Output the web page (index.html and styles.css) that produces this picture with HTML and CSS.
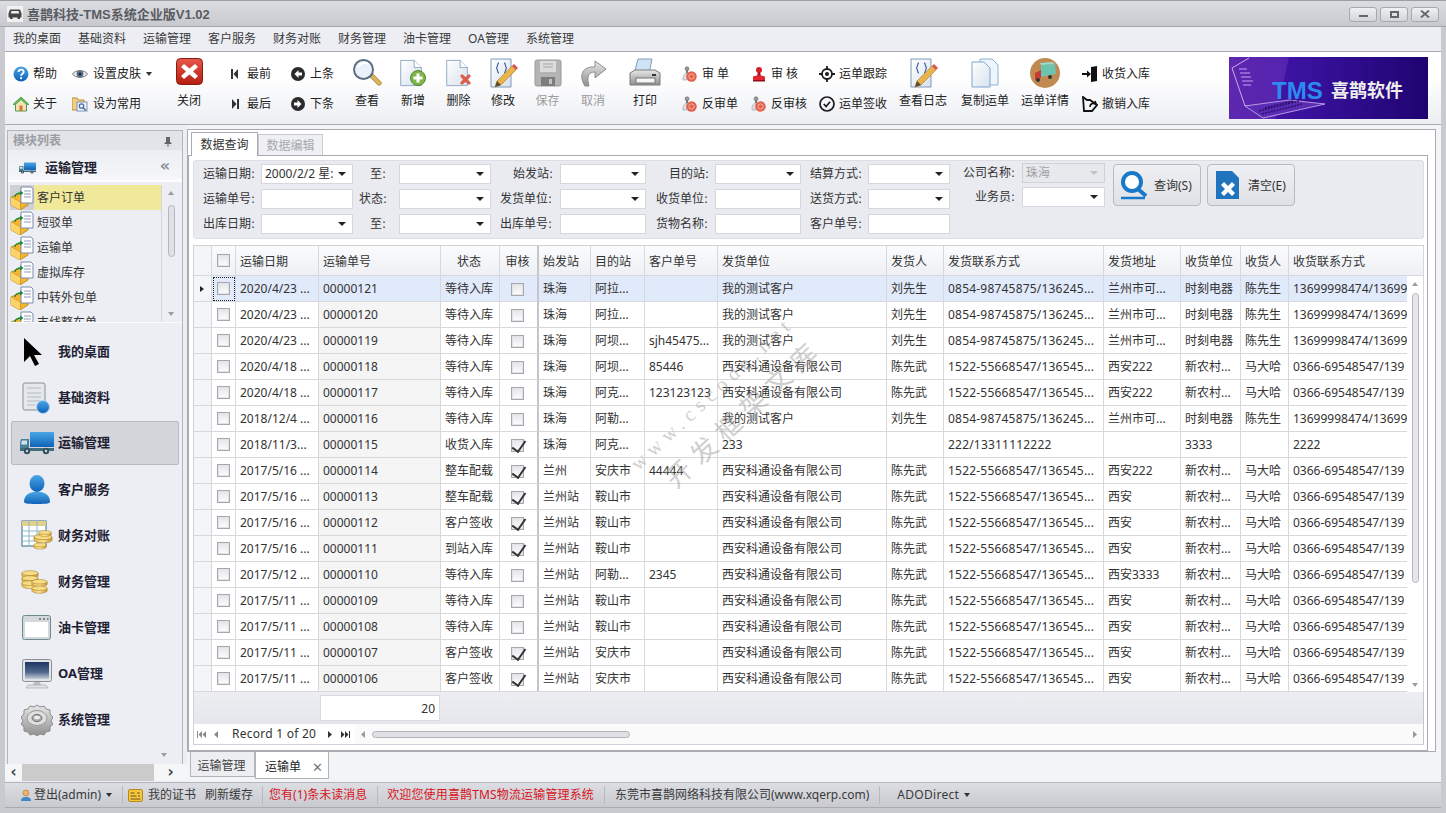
FILE: index.html
```html
<!DOCTYPE html>
<html lang="zh-CN">
<head>
<meta charset="utf-8">
<title>喜鹊科技-TMS系统企业版V1.02</title>
<link rel="stylesheet" href="styles.css">
</head>
<body>
<svg class="defs" aria-hidden="true">
  <defs>
    <linearGradient id="gRed" x1="0" y1="0" x2="0" y2="1"><stop offset="0" stop-color="#e8584a"/><stop offset="1" stop-color="#b51d12"/></linearGradient>
    <linearGradient id="gBlue" x1="0" y1="0" x2="0" y2="1"><stop offset="0" stop-color="#4aa6e6"/><stop offset="1" stop-color="#0f62b8"/></linearGradient>
    <linearGradient id="gPaper" x1="0" y1="0" x2="1" y2="1"><stop offset="0" stop-color="#ffffff"/><stop offset="1" stop-color="#d7e1ee"/></linearGradient>
    <linearGradient id="gGold" x1="0" y1="0" x2="1" y2="0"><stop offset="0" stop-color="#e5b94e"/><stop offset=".5" stop-color="#fbe59a"/><stop offset="1" stop-color="#c9952c"/></linearGradient>
    <linearGradient id="gScreen" x1="0" y1="0" x2="0" y2="1"><stop offset="0" stop-color="#1d3560"/><stop offset=".6" stop-color="#51688c"/><stop offset="1" stop-color="#c4ccd8"/></linearGradient>
    <linearGradient id="gGrey" x1="0" y1="0" x2="0" y2="1"><stop offset="0" stop-color="#e8e8e8"/><stop offset="1" stop-color="#8f8f8f"/></linearGradient>
    <linearGradient id="gBanner" x1="0" y1="0" x2="1" y2="0"><stop offset="0" stop-color="#4b1a9e"/><stop offset=".35" stop-color="#3a12a0"/><stop offset="1" stop-color="#1f0470"/></linearGradient>

    <symbol id="doc" viewBox="0 0 30 30"><path d="M3 1h15l8 8v20H3z" fill="url(#gPaper)" stroke="#8ba3c4"/><path d="M18 1v8h8" fill="#fff" stroke="#8ba3c4"/></symbol>
    <symbol id="pencil" viewBox="0 0 30 30"><path d="M3 1h20v28H3z" fill="url(#gPaper)" stroke="#7f98bd"/><path d="M11 5c-2 0-1 3-2 4s-1 1 0 2 0 4 2 4M16 5c2 0 1 3 2 4s1 1 0 2 0 4-2 4" fill="none" stroke="#4c6fa6" stroke-width="1.300"/><path d="M7 29l2-6L24 8l4 4-15 15z" fill="#e9b44c" stroke="#a87a26" stroke-width=".6"/><path d="M24 8l2-2 4 4-2 2z" fill="#d9534f"/><path d="M7 29l2-6 4 4z" fill="#5c4a32"/></symbol>
    <symbol id="stamp" viewBox="0 0 16 16"><circle cx="5" cy="2.800" r="2" fill="#9a9a9a" stroke="#555" stroke-width=".5"/><path d="M4 4h2v3H4z" fill="#777"/><path d="M1 13c0-4 2-6 4-6v7H1z" fill="#e0e0e0" stroke="#888" stroke-width=".5"/><circle cx="9.500" cy="10.500" r="5.200" fill="#e2604c"/><circle cx="9.500" cy="10.500" r="2.600" fill="none" stroke="#f6b6a6"/></symbol>
    <symbol id="pkg" viewBox="0 0 24 24"><path d="M1 11l9-4 8 4v8l-8 5-9-5z" fill="#f4b62e" stroke="#a87416" stroke-width=".7"/><path d="M1 11l9 5 8-5" fill="none" stroke="#a87416" stroke-width=".7"/><path d="M10 16v8" stroke="#a87416" stroke-width=".7"/><path d="M1 11l9 5v8l-9-5z" fill="#fbd366"/><path d="M11 1h10l2 2v14H11z" fill="#fff" stroke="#7d8bb0"/><path d="M14 5h7M14 8h7M14 11h7" stroke="#8f9bbd"/><path d="M5 11c0-3 2-4 7-4" fill="none" stroke="#1b8a3a" stroke-width="1.400"/><path d="M10 4.500l3.500 2.500-3.500 2.500z" fill="#1b8a3a"/></symbol>
    <symbol id="truck" viewBox="0 0 34 24"><path d="M10 1h24v15H10z" fill="url(#gBlue)"/><path d="M1 8h8v11H0v-7z" fill="#4a7f96"/><path d="M2 9.500h5v4H1z" fill="#cfe3ec"/><path d="M0 17h34v3H0z" fill="#3f6d80"/><circle cx="7" cy="20" r="3.200" fill="#38505c"/><circle cx="26" cy="20" r="3.200" fill="#38505c"/><circle cx="7" cy="20" r="1.200" fill="#cdd8de"/><circle cx="26" cy="20" r="1.200" fill="#cdd8de"/></symbol>
    <symbol id="gear" viewBox="0 0 32 32"><path d="M16 1l3 2 4-1 2 3 4 1 0 4 3 3-2 4 2 3-3 3 0 4-4 1-2 3-4-1-3 2-3-2-4 1-2-3-4-1 0-4-3-3 2-3-2-4 3-3 0-4 4-1 2-3 4 1z" fill="url(#gGrey)" stroke="#8c8c8c"/><ellipse cx="16" cy="14" rx="10" ry="7.500" fill="#dedede" stroke="#9a9a9a"/><ellipse cx="16" cy="14" rx="5" ry="3.600" fill="#a8a8a8" stroke="#777"/><ellipse cx="16" cy="13.500" rx="3" ry="1.800" fill="#eee"/></symbol>
    <symbol id="coin" viewBox="0 0 20 9"><path d="M1 3v3c0 1.500 4 3 9 3s9-1.500 9-3V3z" fill="url(#gGold)" stroke="#a07a20" stroke-width=".6"/><ellipse cx="10" cy="3" rx="9" ry="2.700" fill="#f7dc85" stroke="#a07a20" stroke-width=".6"/></symbol>
  </defs>
</svg>

<div class="win">
  <header class="title">
    <svg class="app-ico" viewBox="0 0 16 16"><rect width="16" height="16" fill="#f1f1f3"/><path d="M3 3.500h10l1.500 4v4h-13v-4z" fill="#444"/><path d="M4.500 5h7l.8 2.500H3.700z" fill="#eee"/><rect x="3" y="11" width="2.500" height="2" fill="#444"/><rect x="10.500" y="11" width="2.500" height="2" fill="#444"/></svg>
    <span class="title-text">喜鹊科技-TMS系统企业版V1.02</span>
    <div class="winbtns">
      <button class="wb"><span class="wb-min"></span></button>
      <button class="wb"><span class="wb-max"></span></button>
      <button class="wb"><svg viewBox="0 0 10 8" width="10" height="8"><path d="M1 .5l8 7M9 .5l-8 7" stroke="#666" stroke-width="1.800"/></svg></button>
    </div>
  </header>

  <nav class="menu">
    <span>我的桌面</span><span>基础资料</span><span>运输管理</span><span>客户服务</span><span>财务对账</span><span>财务管理</span><span>油卡管理</span><span>OA管理</span><span>系统管理</span>
  </nav>

  <section class="toolbar">
    <div class="tc">
      <div class="ti"><svg class="i16" viewBox="0 0 16 16"><circle cx="8" cy="8" r="7.500" fill="url(#gBlue)"/><path d="M5.500 6c0-3.200 5.200-3.200 5.200-.2 0 2-2.600 1.800-2.600 3.900" fill="none" stroke="#fff" stroke-width="1.800"/><circle cx="8.100" cy="12.200" r="1.100" fill="#fff"/></svg><span class="gap4">帮助</span></div>
      <div class="ti"><svg class="i16" viewBox="0 0 16 16"><path d="M8 1L0 8.500h2.500V15h11V8.500H16z" fill="#f4e3b5" stroke="#4d9a4c"/><path d="M8 1L0 8.500h3L8 4l5 4.500h3z" fill="#5fb35a"/><rect x="6.500" y="9.500" width="3" height="5.500" fill="#d9772c"/></svg><span class="gap4">关于</span></div>
    </div>
    <div class="tc">
      <div class="ti"><svg class="i16" viewBox="0 0 16 16"><path d="M.5 8C3 3.500 13 3.500 15.500 8 13 12.500 3 12.500.5 8z" fill="#e8e8ea" stroke="#777"/><circle cx="8" cy="8" r="3.400" fill="#5b6f8c"/><circle cx="8" cy="8" r="1.500" fill="#1e2b3f"/></svg><span class="gap6">设置皮肤</span><i class="caret big-caret"></i></div>
      <div class="ti"><svg class="i16" viewBox="0 0 16 16"><path d="M0 2h5l1.500 2H12v10H0z" fill="#f2cf80" stroke="#b98f3a"/><rect x="5" y="6" width="10" height="9" fill="#eef3fa" stroke="#7e93b8"/><circle cx="9.500" cy="10" r="2.200" fill="none" stroke="#4c6fa6" stroke-width="1.300"/><path d="M11 11.500l3 3" stroke="#4c6fa6" stroke-width="1.500"/></svg><span class="gap6">设为常用</span></div>
    </div>
    <div class="big">
      <svg class="close-ico" viewBox="0 0 27 27"><rect x=".5" y=".5" width="26" height="26" rx="4" fill="url(#gRed)" stroke="#8c1a10"/><path d="M8 6l5.500 4.500L19 6l3 3-5 4.500 5 4.500-3 3-5.500-4.500L8 21l-3-3 5-4.500L5 9z" fill="#fff"/></svg>
      <span class="big-l">关闭</span>
    </div>
    <div class="tc pad17">
      <div class="ti"><svg class="i8" viewBox="0 0 8 12"><rect x="0" y="1" width="2" height="10" fill="#333"/><path d="M7 1v10L2.500 6z" fill="#333"/></svg><span class="gap9">最前</span></div>
      <div class="ti"><svg class="i8" viewBox="0 0 8 12"><rect x="6" y="1" width="2" height="10" fill="#333"/><path d="M1 1v10l4.500-5z" fill="#333"/></svg><span class="gap9">最后</span></div>
    </div>
    <div class="tc">
      <div class="ti"><svg class="i14" viewBox="0 0 14 14"><circle cx="7" cy="7" r="7" fill="#2b2b2b"/><path d="M7.500 3L3.500 7l4 4V8.500h3.500v-3H7.500z" fill="#fff"/></svg><span class="gap6">上条</span></div>
      <div class="ti"><svg class="i14" viewBox="0 0 14 14"><circle cx="7" cy="7" r="7" fill="#2b2b2b"/><path d="M6.500 3l4 4-4 4V8.500H3v-3h3.500z" fill="#fff"/></svg><span class="gap6">下条</span></div>
    </div>
    <div class="big">
      <svg class="big-i" viewBox="0 0 30 30"><path d="M18 19l3-3 8 8c1 1 0 4-3 3z" fill="#d9b45a" stroke="#9a7a2c" stroke-width=".7"/><circle cx="11.500" cy="11.500" r="9.500" fill="#e9f2fb" stroke="#5e6d7d" stroke-width="2"/><path d="M6 9c2-4 7-5 10-3" fill="none" stroke="#fff" stroke-width="2"/></svg>
      <span class="big-l">查看</span>
    </div>
    <div class="big">
      <svg class="big-i" viewBox="0 0 30 30"><use href="#doc" width="27" height="30"/><circle cx="20" cy="20" r="7.500" fill="#7fb54b" stroke="#4d8a2a"/><path d="M18.500 15.500h3v3h3v3h-3v3h-3v-3h-3v-3h3z" fill="#fff"/></svg>
      <span class="big-l">新增</span>
    </div>
    <div class="big">
      <svg class="big-i" viewBox="0 0 30 30"><use href="#doc" width="27" height="30"/><path d="M16 18l2-2 3.500 3 3.500-3 2 2-3 3.500 3 3.500-2 2-3.500-3-3.500 3-2-2 3-3.500z" fill="#d9604c"/></svg>
      <span class="big-l">删除</span>
    </div>
    <div class="big">
      <svg class="big-i" viewBox="0 0 30 30"><use href="#pencil"/></svg>
      <span class="big-l">修改</span>
    </div>
    <div class="big off">
      <svg class="big-i" viewBox="0 0 30 30"><rect x="2" y="2" width="26" height="26" rx="2" fill="#b4b4b4" stroke="#999"/><rect x="7" y="3" width="16" height="11" fill="#dcdcdc"/><path d="M10 6h10M10 9h10" stroke="#a5a5a5"/><rect x="8" y="19" width="14" height="9" fill="#7d7d7d"/><rect x="16" y="21" width="3" height="5" fill="#c4c4c4"/></svg>
      <span class="big-l">保存</span>
    </div>
    <div class="big off">
      <svg class="big-i" viewBox="0 0 30 30"><path d="M7 28C1 19 3 8 17 9V3l11 8-11 9v-6c-8 0-8 6-6 14z" fill="url(#gGrey)" stroke="#8d8d8d"/></svg>
      <span class="big-l">取消</span>
    </div>
    <div class="big">
      <svg class="big-i print" viewBox="0 0 34 30"><path d="M10 1h14l-3 15H6z" fill="#cfe2f6" stroke="#7f9dc0"/><path d="M2 15l5-3h20l5 3v12H2z" fill="url(#gGrey)" stroke="#7a7a7a"/><rect x="8" y="20" width="19" height="5" fill="#f5f5f5" stroke="#777"/><rect x="24" y="16" width="4" height="2" fill="#333"/></svg>
      <span class="big-l">打印</span>
    </div>
    <div class="tc pad8">
      <div class="ti"><svg class="i16" viewBox="0 0 16 16"><use href="#stamp"/></svg><span class="gap5">审 单</span></div>
      <div class="ti"><svg class="i16" viewBox="0 0 16 16"><use href="#stamp"/></svg><span class="gap5">反审单</span></div>
    </div>
    <div class="tc">
      <div class="ti"><svg class="i16" viewBox="0 0 16 16"><circle cx="8" cy="4" r="3" fill="#d3202a"/><path d="M7 6h2l1 4H6z" fill="#b3131d"/><path d="M2 11c0-2 12-2 12 0v3H2z" fill="#e0262f"/><rect x="2" y="14" width="12" height="1.500" fill="#8d0e15"/></svg><span class="gap5">审 核</span></div>
      <div class="ti"><svg class="i16" viewBox="0 0 16 16"><use href="#stamp"/></svg><span class="gap5">反审核</span></div>
    </div>
    <div class="tc">
      <div class="ti"><svg class="i16" viewBox="0 0 16 16"><circle cx="8" cy="8" r="5" fill="none" stroke="#1c1c1c" stroke-width="1.800"/><circle cx="8" cy="8" r="2" fill="#1c1c1c"/><path d="M8 0v3M8 13v3M0 8h3M13 8h3" stroke="#1c1c1c" stroke-width="1.800"/></svg><span class="gap5">运单跟踪</span></div>
      <div class="ti"><svg class="i16" viewBox="0 0 16 16"><circle cx="8" cy="8" r="7" fill="none" stroke="#1c1c1c" stroke-width="1.700"/><path d="M4.800 8l2.300 2.500 4-4.700" fill="none" stroke="#1c1c1c" stroke-width="1.700"/></svg><span class="gap5">运单签收</span></div>
    </div>
    <div class="big">
      <svg class="big-i" viewBox="0 0 30 30"><use href="#pencil"/></svg>
      <span class="big-l">查看日志</span>
    </div>
    <div class="big">
      <svg class="big-i" viewBox="0 0 30 30"><path d="M10 1h12l6 6v20H10z" fill="#eef4fb" stroke="#8fb1d6"/><path d="M2 4h12l6 6v19H2z" fill="url(#gPaper)" stroke="#7fa5cf"/></svg>
      <span class="big-l">复制运单</span>
    </div>
    <div class="big">
      <svg class="big-i" viewBox="0 0 30 30"><circle cx="15" cy="15" r="15" fill="#c08a52"/><path d="M11 7l14-1 1 10-15 3z" fill="#6cc4b0"/><path d="M11 7l14-1-3-2-12 1z" fill="#9adccb"/><path d="M5 15l6-3v8l-6 2z" fill="#c93a34"/><circle cx="8" cy="22" r="2" fill="#333"/><circle cx="20" cy="19" r="2" fill="#333"/></svg>
      <span class="big-l">运单详情</span>
    </div>
    <div class="tc pad8">
      <div class="ti"><svg class="i16" viewBox="0 0 16 16"><path d="M9 1l6-1v15l-6 1z" fill="#111"/><path d="M0 7h5V4.500L9 8l-4 3.500V9H0z" fill="#111"/></svg><span class="gap4">收货入库</span></div>
      <div class="ti"><svg class="i16" viewBox="0 0 16 16"><path d="M1 1l4 3 3 0 7 5-5 6H2z" fill="none" stroke="#111" stroke-width="1.800"/><path d="M8 11c0-4 3-4 6-3l-1-3" fill="none" stroke="#111" stroke-width="1.600"/></svg><span class="gap4">撤销入库</span></div>
    </div>
    <div class="banner">
      <svg class="banner-art" viewBox="0 0 199 62"><rect width="199" height="62" fill="url(#gBanner)"/><path d="M60 0L46 62H0V0z" fill="#7a3cc8" opacity=".4"/><path d="M3 11L20 1M3 11l13 38M16 49l44-3" fill="none" stroke="#d6b8ef" stroke-width=".9"/><path d="M16 49L34 61 96 47 60 43z" fill="#5b2bb4" stroke="#c2a6e6" stroke-width=".9"/><path d="M10 12h8M11 16h10M12 20h10M13 24h11M14 28h8" stroke="#a874de" stroke-width="1.300"/><path d="M30 54l40-10M33 57l40-10M36 51l28-7" stroke="#2a1270" stroke-width="1.500" stroke-dasharray="2 1"/></svg>
      <span class="b-tms">TMS</span><span class="b-cn">喜鹊软件</span>
    </div>
  </section>

  <div class="work">
    <aside class="side">
      <div class="sp">
        <div class="sp-head"><span>模块列表</span><svg class="pin" viewBox="0 0 8 10"><path d="M2 0h4v5l1.500 1v1h-7V6L2 5zM3.500 7h1v3h-1z" fill="#666"/></svg></div>
        <div class="sp-group"><svg class="g-truck" viewBox="0 0 34 24"><use href="#truck"/></svg><b>运输管理</b><span class="chev">«</span></div>
        <div class="sp-listwrap">
          <ul class="sp-list">
            <li class="cur"><svg class="pk" viewBox="0 0 24 24"><use href="#pkg"/></svg><span>客户订单</span></li>
            <li><svg class="pk" viewBox="0 0 24 24"><use href="#pkg"/></svg><span>短驳单</span></li>
            <li><svg class="pk" viewBox="0 0 24 24"><use href="#pkg"/></svg><span>运输单</span></li>
            <li><svg class="pk" viewBox="0 0 24 24"><use href="#pkg"/></svg><span>虚拟库存</span></li>
            <li><svg class="pk" viewBox="0 0 24 24"><use href="#pkg"/></svg><span>中转外包单</span></li>
            <li><svg class="pk" viewBox="0 0 24 24"><use href="#pkg"/></svg><span>支线整车单</span></li>
          </ul>
          <div class="sp-scroll"><i class="up"></i><i class="thumb"></i><i class="down"></i></div>
        </div>
        <div class="sp-nav">
          <div class="nv"><span class="nv-i"><svg width="20" height="30" viewBox="0 0 20 30" class="cursor"><path d="M2 1v24l6-6 5 10 4-2-5-9h8z" fill="#000"/></svg></span><b>我的桌面</b></div>
          <div class="nv"><span class="nv-i"><svg width="30" height="32" viewBox="0 0 30 32"><rect x="1" y="1" width="22" height="27" rx="2" fill="#e4e7ec" stroke="#8a8f96"/><path d="M5 6h14M5 11h14M5 15h14M5 19h14M5 23h8" stroke="#b3bac4"/><circle cx="21" cy="25" r="6.500" fill="url(#gBlue)" stroke="#b8d6ef"/></svg></span><b>基础资料</b></div>
          <div class="nv on"><span class="nv-i"><svg width="34" height="24" viewBox="0 0 34 24"><use href="#truck"/></svg></span><b>运输管理</b></div>
          <div class="nv"><span class="nv-i"><svg width="28" height="30" viewBox="0 0 28 30"><ellipse cx="14" cy="8.500" rx="7.500" ry="8.500" fill="url(#gBlue)"/><path d="M1 27c0-7 5-9 9-10h8c4 1 9 3 9 10 0 1-2 2-13 2S1 28 1 27z" fill="url(#gBlue)"/></svg></span><b>客户服务</b></div>
          <div class="nv"><span class="nv-i"><svg width="32" height="32" viewBox="0 0 32 32"><rect x="1" y="1" width="24" height="25" fill="#fff" stroke="#2f6d8c"/><rect x="1" y="1" width="24" height="5" fill="#e2d08e"/><path d="M1 11h24M1 16h24M1 21h24M8 1v25M16 1v25" stroke="#8fb7cc"/><use href="#coin" x="12" y="14" width="20" height="9"/><use href="#coin" x="17" y="10" width="14" height="7"/><use href="#coin" x="12" y="22" width="14" height="8"/></svg></span><b>财务对账</b></div>
          <div class="nv"><span class="nv-i"><svg width="32" height="26" viewBox="0 0 32 26"><use href="#coin" x="0" y="1" width="18" height="9"/><use href="#coin" x="0" y="6" width="18" height="9"/><use href="#coin" x="0" y="11" width="18" height="9"/><use href="#coin" x="10" y="10" width="17" height="8"/><use href="#coin" x="10" y="16" width="17" height="9"/></svg></span><b>财务管理</b></div>
          <div class="nv"><span class="nv-i"><svg width="30" height="26" viewBox="0 0 30 26"><rect x=".5" y=".5" width="28" height="24" rx="2" fill="#d3d8dc" stroke="#6f8b90"/><rect x="3" y="7" width="23" height="15" fill="#fff"/><path d="M17 4h2M21 4h2M25 4h1.500" stroke="#666" stroke-width="1.500"/></svg></span><b>油卡管理</b></div>
          <div class="nv"><span class="nv-i"><svg width="30" height="30" viewBox="0 0 30 30"><rect x=".5" y=".5" width="29" height="22" rx="2" fill="#e3e4e8" stroke="#8b8f96"/><rect x="3" y="3" width="24" height="17" fill="url(#gScreen)"/><path d="M12 23h6l1 3h-8z" fill="#bdbfc4"/><path d="M6 26h18l2 3H4z" fill="#e2e3e6" stroke="#9a9ca2" stroke-width=".6"/></svg></span><b>OA管理</b></div>
          <div class="nv"><span class="nv-i"><svg width="32" height="32" viewBox="0 0 32 32"><use href="#gear"/></svg></span><b>系统管理</b></div>
          <div class="nv-more"><i class="down"></i></div>
        </div>
      </div>
      <div class="hscroll"><span class="ha">‹</span><i class="ht"></i><span class="ha r">›</span></div>
    </aside>

    <main class="mainc">
      <div class="doc">
        <div class="subtabs"><span class="st on">数据查询</span><span class="st">数据编辑</span></div>
        <div class="page">
          <form class="filter">
            <div class="fg">
              <label class="l6">运输日期:</label><div class="f dd date"><span>2000/2/2 星:</span></div>
              <label class="l13">至:</label><div class="f dd"></div>
              <label class="l7">始发站:</label><div class="f dd"></div>
              <label class="l6">目的站:</label><div class="f dd"></div>
              <label class="l6">结算方式:</label><div class="f dd"></div>
              <label class="l7 up1">公司名称:</label><div class="f dd dis up1"><span>珠海</span></div>
              <label class="l6">运输单号:</label><div class="f"></div>
              <label class="l12">状态:</label><div class="f dd"></div>
              <label class="l8">发货单位:</label><div class="f dd"></div>
              <label class="l7">收货单位:</label><div class="f"></div>
              <label class="l6">送货方式:</label><div class="f dd"></div>
              <label class="l7 up2">业务员:</label><div class="f dd up2"></div>
              <label class="l6">出库日期:</label><div class="f dd"></div>
              <label class="l13">至:</label><div class="f dd"></div>
              <label class="l8">出库单号:</label><div class="f"></div>
              <label class="l7">货物名称:</label><div class="f"></div>
              <label class="l6">客户单号:</label><div class="f"></div>
            </div>
            <div class="fb">
              <button type="button" class="qb"><svg width="32" height="32" viewBox="0 0 32 32"><circle cx="14" cy="13" r="9" fill="#fff" stroke="#1a78c8" stroke-width="4"/><path d="M20 20l8 7" stroke="#1a78c8" stroke-width="4"/><path d="M3 29h24" stroke="#1a78c8" stroke-width="2.500"/></svg><span>查询(S)</span></button>
              <button type="button" class="qb"><svg width="32" height="32" viewBox="0 0 32 32"><path d="M4 2h16l7 7v21H4z" fill="#1f74bd"/><path d="M9 16l3-3 4 4 4-4 3 3-4 4 4 4-3 3-4-4-4 4-3-3 4-4z" fill="#fff"/></svg><span>清空(E)</span></button>
            </div>
          </form>

          <div class="grid">
            <table class="gt">
              <colgroup><col class="c0"><col class="c1"><col class="c2"><col class="c3"><col class="c4"><col class="c5"><col class="c6"><col class="c7"><col class="c8"><col class="c9"><col class="c10"><col class="c11"><col class="c12"><col class="c13"><col class="c14"><col class="c15"></colgroup>
              <thead>
                <tr><th class="rh"></th><th class="ck"><i class="cb"></i></th><th>运输日期</th><th>运输单号</th><th class="c">状态</th><th class="c">审核</th><th class="sp2">始发站</th><th>目的站</th><th>客户单号</th><th>发货单位</th><th>发货人</th><th>发货联系方式</th><th>发货地址</th><th>收货单位</th><th>收货人</th><th>收货联系方式</th></tr>
              </thead>
              <tbody>
                <tr class="sel"><td class="rh"><i class="cur-arrow"></i></td><td class="ck focus"><i class="cb"></i></td><td>2020/4/23 ...</td><td>00000121</td><td class="c">等待入库</td><td class="c"><i class="cb"></i></td><td class="sp2">珠海</td><td>阿拉...</td><td></td><td>我的测试客户</td><td>刘先生</td><td>0854-98745875/136245...</td><td>兰州市可...</td><td>时刻电器</td><td>陈先生</td><td class="last">13699998474/13699998474</td></tr>
                <tr><td class="rh"></td><td class="ck"><i class="cb"></i></td><td>2020/4/23 ...</td><td class="no">00000120</td><td class="c">等待入库</td><td class="c"><i class="cb"></i></td><td class="sp2">珠海</td><td>阿拉...</td><td></td><td>我的测试客户</td><td>刘先生</td><td>0854-98745875/136245...</td><td>兰州市可...</td><td>时刻电器</td><td>陈先生</td><td class="last">13699998474/13699998474</td></tr>
                <tr><td class="rh"></td><td class="ck"><i class="cb"></i></td><td>2020/4/23 ...</td><td class="no">00000119</td><td class="c">等待入库</td><td class="c"><i class="cb"></i></td><td class="sp2">珠海</td><td>阿坝...</td><td>sjh45475...</td><td>我的测试客户</td><td>刘先生</td><td>0854-98745875/136245...</td><td>兰州市可...</td><td>时刻电器</td><td>陈先生</td><td class="last">13699998474/13699998474</td></tr>
                <tr><td class="rh"></td><td class="ck"><i class="cb"></i></td><td>2020/4/18 ...</td><td class="no">00000118</td><td class="c">等待入库</td><td class="c"><i class="cb"></i></td><td class="sp2">珠海</td><td>阿坝...</td><td>85446</td><td>西安科通设备有限公司</td><td>陈先武</td><td>1522-55668547/136545...</td><td>西安222</td><td>新农村...</td><td>马大哈</td><td class="last">0366-69548547/139</td></tr>
                <tr><td class="rh"></td><td class="ck"><i class="cb"></i></td><td>2020/4/18 ...</td><td class="no">00000117</td><td class="c">等待入库</td><td class="c"><i class="cb"></i></td><td class="sp2">珠海</td><td>阿克...</td><td>123123123</td><td>西安科通设备有限公司</td><td>陈先武</td><td>1522-55668547/136545...</td><td>西安222</td><td>新农村...</td><td>马大哈</td><td class="last">0366-69548547/139</td></tr>
                <tr><td class="rh"></td><td class="ck"><i class="cb"></i></td><td>2018/12/4 ...</td><td class="no">00000116</td><td class="c">等待入库</td><td class="c"><i class="cb"></i></td><td class="sp2">珠海</td><td>阿勒...</td><td></td><td>我的测试客户</td><td>刘先生</td><td>0854-98745875/136245...</td><td>兰州市可...</td><td>时刻电器</td><td>陈先生</td><td class="last">13699998474/13699998474</td></tr>
                <tr><td class="rh"></td><td class="ck"><i class="cb"></i></td><td>2018/11/3...</td><td class="no">00000115</td><td class="c">收货入库</td><td class="c"><i class="cb on"></i></td><td class="sp2">珠海</td><td>阿克...</td><td></td><td>233</td><td></td><td>222/13311112222</td><td></td><td>3333</td><td></td><td class="last">2222</td></tr>
                <tr><td class="rh"></td><td class="ck"><i class="cb"></i></td><td>2017/5/16 ...</td><td class="no">00000114</td><td class="c">整车配载</td><td class="c"><i class="cb on"></i></td><td class="sp2">兰州</td><td>安庆市</td><td>44444</td><td>西安科通设备有限公司</td><td>陈先武</td><td>1522-55668547/136545...</td><td>西安222</td><td>新农村...</td><td>马大哈</td><td class="last">0366-69548547/139</td></tr>
                <tr><td class="rh"></td><td class="ck"><i class="cb"></i></td><td>2017/5/16 ...</td><td class="no">00000113</td><td class="c">整车配载</td><td class="c"><i class="cb on"></i></td><td class="sp2">兰州站</td><td>鞍山市</td><td></td><td>西安科通设备有限公司</td><td>陈先武</td><td>1522-55668547/136545...</td><td>西安</td><td>新农村...</td><td>马大哈</td><td class="last">0366-69548547/139</td></tr>
                <tr><td class="rh"></td><td class="ck"><i class="cb"></i></td><td>2017/5/16 ...</td><td class="no">00000112</td><td class="c">客户签收</td><td class="c"><i class="cb on"></i></td><td class="sp2">兰州站</td><td>鞍山市</td><td></td><td>西安科通设备有限公司</td><td>陈先武</td><td>1522-55668547/136545...</td><td>西安</td><td>新农村...</td><td>马大哈</td><td class="last">0366-69548547/139</td></tr>
                <tr><td class="rh"></td><td class="ck"><i class="cb"></i></td><td>2017/5/16 ...</td><td class="no">00000111</td><td class="c">到站入库</td><td class="c"><i class="cb on"></i></td><td class="sp2">兰州站</td><td>鞍山市</td><td></td><td>西安科通设备有限公司</td><td>陈先武</td><td>1522-55668547/136545...</td><td>西安</td><td>新农村...</td><td>马大哈</td><td class="last">0366-69548547/139</td></tr>
                <tr><td class="rh"></td><td class="ck"><i class="cb"></i></td><td>2017/5/12 ...</td><td class="no">00000110</td><td class="c">等待入库</td><td class="c"><i class="cb"></i></td><td class="sp2">兰州站</td><td>阿勒...</td><td>2345</td><td>西安科通设备有限公司</td><td>陈先武</td><td>1522-55668547/136545...</td><td>西安3333</td><td>新农村...</td><td>马大哈</td><td class="last">0366-69548547/139</td></tr>
                <tr><td class="rh"></td><td class="ck"><i class="cb"></i></td><td>2017/5/11 ...</td><td class="no">00000109</td><td class="c">等待入库</td><td class="c"><i class="cb"></i></td><td class="sp2">兰州站</td><td>鞍山市</td><td></td><td>西安科通设备有限公司</td><td>陈先武</td><td>1522-55668547/136545...</td><td>西安</td><td>新农村...</td><td>马大哈</td><td class="last">0366-69548547/139</td></tr>
                <tr><td class="rh"></td><td class="ck"><i class="cb"></i></td><td>2017/5/11 ...</td><td class="no">00000108</td><td class="c">等待入库</td><td class="c"><i class="cb"></i></td><td class="sp2">兰州站</td><td>鞍山市</td><td></td><td>西安科通设备有限公司</td><td>陈先武</td><td>1522-55668547/136545...</td><td>西安</td><td>新农村...</td><td>马大哈</td><td class="last">0366-69548547/139</td></tr>
                <tr><td class="rh"></td><td class="ck"><i class="cb"></i></td><td>2017/5/11 ...</td><td class="no">00000107</td><td class="c">客户签收</td><td class="c"><i class="cb on"></i></td><td class="sp2">兰州站</td><td>安庆市</td><td></td><td>西安科通设备有限公司</td><td>陈先武</td><td>1522-55668547/136545...</td><td>西安</td><td>新农村...</td><td>马大哈</td><td class="last">0366-69548547/139</td></tr>
                <tr><td class="rh"></td><td class="ck"><i class="cb"></i></td><td>2017/5/11 ...</td><td class="no">00000106</td><td class="c">客户签收</td><td class="c"><i class="cb on"></i></td><td class="sp2">兰州站</td><td>安庆市</td><td></td><td>西安科通设备有限公司</td><td>陈先武</td><td>1522-55668547/136545...</td><td>西安</td><td>新农村...</td><td>马大哈</td><td class="last">0366-69548547/139</td></tr>
              </tbody>
            </table>
            <div class="vscroll"><i class="up"></i><i class="thumb"></i><i class="down"></i></div>
            <div class="wm"><span>www.cscode.net</span><span class="wm2">开发框架文库</span></div>
            <div class="gfoot"><div class="sum">20</div></div>
            <div class="gnav">
              <div class="gn-l">
                <svg class="gi first" viewBox="0 0 9 7"><path d="M0 0h1v7H0zM5 0v7L1.500 3.500zM9 0v7L5.500 3.500z" fill="#8a8a8a"/></svg>
                <svg class="gi prev" viewBox="0 0 4 7"><path d="M4 0v7L0 3.500z" fill="#8a8a8a"/></svg>
                <span class="rec">Record 1 of 20</span>
                <svg class="gi next" viewBox="0 0 4 7"><path d="M0 0v7l4-3.500z" fill="#333"/></svg>
                <svg class="gi last2" viewBox="0 0 9 7"><path d="M8 0h1v7H8zM4 0v7l3.500-3.500zM0 0v7l3.500-3.500z" fill="#333"/></svg>
              </div>
              <div class="gn-r">
                <svg class="gi left" viewBox="0 0 4 7"><path d="M4 0v7L0 3.500z" fill="#999"/></svg>
                <i class="hthumb"></i>
                <svg class="gi right" viewBox="0 0 4 7"><path d="M0 0v7l4-3.500z" fill="#999"/></svg>
              </div>
            </div>
          </div>
        </div>
      </div>
      <div class="btabs"><span class="bt">运输管理</span><span class="bt on">运输单<em class="x">✕</em></span></div>
    </main>
  </div>

  <footer class="status">
    <svg class="s-user" viewBox="0 0 12 14"><circle cx="6" cy="5" r="3" fill="#f0b070" stroke="#b87530" stroke-width=".6"/><path d="M1 13c0-3 2-4 5-4s5 1 5 4z" fill="#3f87c9"/></svg>
    <span class="s1">登出(admin)</span><i class="caret"></i><i class="sep s-a"></i>
    <svg class="s-cert" viewBox="0 0 15 13"><rect x=".5" y=".5" width="14" height="12" rx="1.500" fill="#f5c840" stroke="#b58a1c"/><path d="M2.500 4h4M2.500 7h6M9 4h3M10 7h2M2.500 10h10" stroke="#6d5410"/></svg>
    <span class="s2">我的证书</span><span class="s3">刷新缓存</span><i class="sep s-b"></i>
    <span class="red">您有(1)条未读消息</span><i class="sep s-c"></i>
    <span class="red wide">欢迎您使用喜鹊TMS物流运输管理系统</span><i class="sep"></i>
    <span>东莞市喜鹊网络科技有限公司(www.xqerp.com)</span><i class="sep"></i>
    <span class="s-ado">ADODirect</span><i class="caret"></i>
  </footer>
</div>
</body>
</html>
```

FILE: styles.css
```css
* { box-sizing: border-box; }
html, body { margin: 0; padding: 0; height: 100%; overflow: hidden; }
body {
  font: 12px/1.2 "Noto Sans", "Noto Sans CJK SC", sans-serif;
  color: #333;
  background: #c8cad0;
}
.defs { position: absolute; width: 0; height: 0; }
svg { display: block; flex: none; }
i, em { font-style: normal; }

.win { width: 1446px; height: 813px; display: flex; flex-direction: column; padding-bottom: 5px; }

/* title bar */
.title {
  height: 27px; flex: none;
  display: flex; align-items: center;
  padding: 0 7px;
  background: linear-gradient(#dcdde1, #c7c9cf);
  border-top: 1px solid #9c9ea4;
  border-bottom: 1px solid #a3a5ab;
}
.app-ico { width: 16px; height: 16px; }
.title-text { margin-left: 4px; font: bold 13px "Liberation Sans", "Noto Sans CJK SC", sans-serif; color: #5a5c62; }
.winbtns { margin-left: auto; display: flex; gap: 3px; padding-top: 1px; }
.wb {
  width: 28px; height: 15px; padding: 0;
  border: 1px solid #a6a8ae; border-radius: 3px;
  background: linear-gradient(#eef0f3, #d2d4da);
  display: flex; align-items: center; justify-content: center;
}
.wb-min { width: 9px; height: 2px; background: #666; margin-top: 4px; }
.wb-max { width: 9px; height: 7px; border: 2px solid #666; }

/* menu */
.menu {
  height: 25px; flex: none; margin: 0 5px;
  display: flex; align-items: center; gap: 17px; padding: 0 8px;
  background: #eceef3;
  border-bottom: 1px solid #a9abb1;
  color: #3a3a3a;
}

/* toolbar */
.toolbar {
  height: 73px; flex: none; margin: 0 5px;
  display: grid;
  grid-template-columns: 8px 59px 92px 50px 77px 53px 46px 46px 45px 44px 45px 46px 58px 77px 68px 73px 62px 62px 58px 155px 199px 1fr;
  background: linear-gradient(#fff 0%, #fff 35%, #eceef3 100%);
  border-bottom: 1px solid #a9abb1;
}
.toolbar::before { content: ""; }
.tc { display: flex; flex-direction: column; padding-top: 13px; gap: 12px; color: #222; }
.pad17 { padding-left: 17px; }
.pad8 { padding-left: 8px; }
.ti { display: flex; align-items: center; height: 18px; white-space: nowrap; }
.i16 { width: 16px; height: 16px; }
.i14 { width: 14px; height: 14px; }
.i8 { width: 8px; height: 12px; }
.gap4 { margin-left: 4px; }
.gap5 { margin-left: 4px; }
.gap6 { margin-left: 5px; }
.gap9 { margin-left: 8px; }
.big-caret { margin-left: 5px; }
.caret { width: 0; height: 0; border: 3px solid transparent; border-top: 4px solid #333; border-bottom: 0; display: inline-block; }
.big { display: flex; flex-direction: column; align-items: center; padding-top: 6px; color: #222; white-space: nowrap; }
.big-i { width: 30px; height: 30px; }
.big-i.print { width: 34px; }
.close-ico { width: 27px; height: 27px; }
.big-l { margin-top: 6px; }
.big .close-ico + .big-l { margin-top: 9px; }
.off { color: #9c9c9c; }
.banner { position: relative; margin: 5px 0; width: 199px; height: 62px; overflow: hidden; }
.banner-art { width: 199px; height: 62px; }
.b-tms { position: absolute; left: 43px; top: 20px; font: bold 24px "Liberation Sans", sans-serif; color: #2a8cf0; }
.b-cn { position: absolute; left: 102px; top: 19px; font: bold 18px "Noto Sans CJK SC", sans-serif; color: #eee; }

/* work area */
.work { flex: 1; display: flex; min-height: 0; background: #eceef3; margin: 0 5px; }

.side { width: 182px; flex: none; display: flex; flex-direction: column; padding-top: 5px; }
.sp { flex: 1; margin: 0 4px 0 2px; border: 1px solid #b3b5bb; border-bottom: 0; display: flex; flex-direction: column; min-height: 0; background: #eceef3; }
.sp-head {
  height: 19px; flex: none; display: flex; align-items: center; justify-content: space-between;
  padding: 2px 10px 0 5px; background: #e2e4e9; color: #9a9ca2; font-weight: bold;
}
.pin { width: 8px; height: 10px; }
.sp-group {
  height: 32px; flex: none; display: flex; align-items: center; padding: 3px 0 0 11px;
  background: linear-gradient(#eceef3, #f4f5f8 85%, #fff);
}
.g-truck { width: 17px; height: 12px; }
.sp-group b { margin-left: 9px; font-size: 13px; color: #1f2233; }
.chev { margin-left: auto; margin-right: 12px; font: bold 16px/1 "DejaVu Sans", sans-serif; color: #8a8d94; margin-top: -3px; }
.sp-listwrap { height: 141px; flex: none; display: flex; padding: 3px 0 0; border-bottom: 1px solid #fafbfc; position: relative; }
.sp-list { list-style: none; margin: 0 0 0 2px; padding: 0; width: 151px; height: 137px; overflow: hidden; }
.sp-list li { height: 25px; display: flex; align-items: center; }
.pk { width: 24px; height: 24px; }
.sp-list li span { margin: 2px 0 0 3px; }
.sp-list li.cur { background: linear-gradient(90deg, #cfd0d6 24px, #f0e99a 24px); }
.sp-scroll { width: 19px; display: flex; flex-direction: column; align-items: center; border-left: 1px solid #d4d6db; height: 137px; }
.sp-scroll .thumb { width: 7px; height: 52px; margin-top: 10px; border: 1px solid #b5b7bd; border-radius: 4px; background: #dfe1e6; }
.up, .down { width: 0; height: 0; border: 3px solid transparent; display: block; }
.up { border-top: 0; border-bottom: 4px solid #9a9ca2; margin-top: 6px; }
.down { border-bottom: 0; border-top: 4px solid #9a9ca2; }
.sp-scroll .down { margin-top: auto; margin-bottom: 6px; }

.sp-nav { flex: 1; display: flex; flex-direction: column; padding: 6px 3px 0; min-height: 0; }
.nv { height: 46px; flex: none; display: flex; align-items: center; border: 1px solid transparent; border-radius: 2px; }
.nv b { font-size: 13px; color: #1e2133; }
.nv-i { width: 46px; height: 34px; display: flex; align-items: center; justify-content: center; padding-left: 4px; }
.nv.on { background: #d4d6db; border-color: #b8bac0; height: 44px; margin-bottom: 2px; }
.nv .cursor { margin-left: -10px; }
.nv-more { display: flex; justify-content: flex-end; padding: 10px 12px 0 0; }
.hscroll { height: 17px; flex: none; display: flex; align-items: center; background: #f5f6f8; margin-bottom: 1px; }
.ha { width: 17px; text-align: center; font: bold 15px/15px "DejaVu Sans", sans-serif; color: #444; }
.ha.r { width: 33px; }
.ht { width: 132px; height: 17px; background: #cbcbcb; }

/* main */
.mainc { flex: 1; min-width: 0; display: flex; flex-direction: column; padding-top: 4px; background: #f3f4f6; }
.doc { height: 623px; flex: none; width: 1249px; border: 1px solid #a9abb1; background: #fff; display: flex; flex-direction: column; }
.subtabs { height: 25px; flex: none; display: flex; align-items: flex-end; padding-left: 3px; }
.st { width: 65px; height: 21px; display: flex; align-items: center; justify-content: center; padding-top: 2px; border: 1px solid #c8cad0; border-bottom: 0; background: #eff0f3; color: #a6a8ae; }
.st.on { width: 67px; height: 24px; background: #fff; color: #333; border-color: #a9abb1; margin-bottom: -1px; position: relative; z-index: 1; }
.page { flex: 1; margin-right: 7px; border: 1px solid #a9abb1; padding: 4px 3px 0 4px; display: flex; flex-direction: column; gap: 6px; min-height: 0; }

.filter { height: 79px; flex: none; display: flex; background: #e9ebf0; border: 1px solid #dcdee3; border-radius: 3px; padding: 3px 0 0 9px; }
.fg {
  display: grid;
  grid-template-columns: 58px 92px 46px 92px 69px 86px 69px 86px 67px 82px 72px 83px;
  grid-auto-rows: 20px; row-gap: 5px;
}
.fg label { display: flex; align-items: center; justify-content: flex-end; padding-top: 1px; white-space: nowrap; color: #333; font-family: "DejaVu Sans", "Noto Sans CJK SC", sans-serif; }
.l6 { padding-right: 6px; }
.l7 { padding-right: 7px; }
.l8 { padding-right: 8px; }
.l12 { padding-right: 12px; }
.l13 { padding-right: 13px; }
.up1 { position: relative; top: -1px; }
.up2 { position: relative; top: -2px; }
.f { background: #fff; border: 1px solid #d5d7dc; position: relative; display: flex; align-items: center; padding-left: 3px; white-space: nowrap; overflow: hidden; }
.dd::after { content: ""; position: absolute; right: 6px; top: 7px; width: 0; height: 0; border: 4px solid transparent; border-top: 4px solid #222; border-bottom: 0; }
.dis { background: #e8e9ec; color: #9fa1a7; border-color: #cfd1d6; }
.dis::after { border-top-color: #bfc1c6; }
.fb { display: flex; gap: 6px; margin-left: 8px; }
.qb {
  width: 88px; height: 42px; display: flex; align-items: center; gap: 4px; padding: 0 0 0 4px;
  border: 1px solid #b8bac0; border-radius: 4px;
  background: linear-gradient(#eef0f3, #dfe1e6);
  color: #333; font: 12px "Noto Sans", "Noto Sans CJK SC", sans-serif; white-space: nowrap;
}

/* grid */
.grid { position: relative; height: 500px; flex: none; border: 1px solid #d0d2d7; border-right-color: #c4c6cb; display: flex; flex-direction: column; }
.gt { table-layout: fixed; width: 1230px; border-collapse: separate; border-spacing: 0; flex: none; }
.c0 { width: 18px; } .c1 { width: 24px; } .c2 { width: 83px; } .c3 { width: 122px; }
.c4 { width: 59px; } .c5 { width: 39px; } .c6 { width: 52px; } .c7 { width: 54px; }
.c8 { width: 73px; } .c9 { width: 169px; } .c10 { width: 57px; } .c11 { width: 160px; }
.c12 { width: 77px; } .c13 { width: 60px; } .c14 { width: 48px; } .c15 { width: 135px; }
.gt th, .gt td {
  padding: 1px 0 0 4px; overflow: hidden; white-space: nowrap; text-align: left; font-weight: normal;
  border-right: 1px solid #d6d8de; border-bottom: 1px solid #d6d8de;
  color: #333;
}
.gt th { height: 30px; padding-top: 3px; background: linear-gradient(#fafbfc, #eef0f4); }
.gt td { height: 26px; background: #fff; }
.gt td:nth-child(12) { letter-spacing: .2px; }
.gt .c { text-align: center; padding: 1px 2px 0 0; }
.gt th.c { padding-top: 3px; }
.gt .rh { background: #f4f5f7; padding: 0; }
.gt .ck { text-align: center; padding: 0; }
.gt td:nth-child(6), .gt th:nth-child(6) { border-right: 2px solid #c4c6cc; }
.gt .no { background: #f5f5f5; }
.gt td.last { padding-right: 17px; }
.sel td { background: #e1eafa; }
.gt .sel .rh { background: #f4f5f7; }
.gt .focus { outline: 1px dotted #222; outline-offset: -2px; }
.cur-arrow { display: block; width: 0; height: 0; margin-left: 6px; border: 3px solid transparent; border-left: 4px solid #222; border-right: 0; }
.cb { display: block; margin: 0 auto; width: 13px; height: 13px; border: 1px solid #a6a8ae; background: linear-gradient(#e4e5e8, #fdfdfd); box-shadow: inset 0 0 0 1px #e2e3e6; position: relative; }
.cb.on::after { content: ""; position: absolute; left: 3px; top: -2px; width: 6px; height: 12px; border: solid #333; border-width: 0 2px 2px 0; transform: rotate(35deg); }
.vscroll { position: absolute; right: 0; top: 30px; width: 16px; height: 416px; display: flex; flex-direction: column; align-items: center; background: #fff; }
.vscroll .thumb { width: 7px; height: 290px; margin-top: 7px; border: 1px solid #b5b7bd; border-radius: 4px; background: #e6e7ea; }
.vscroll .down { margin-top: auto; margin-bottom: 5px; }
.wm { position: absolute; left: 432px; top: 212px; width: 320px; transform: rotate(-43deg); transform-origin: left top; color: #a8a8a8; opacity: .55; display: flex; flex-direction: column; pointer-events: none; }
.wm span { font: 20px "Liberation Serif", serif; letter-spacing: 6px; white-space: nowrap; }
.wm .wm2 { font: 26px "Noto Sans CJK SC", sans-serif; letter-spacing: 8px; margin: 4px 0 0 15px; }
.gfoot { height: 32px; flex: none; background: linear-gradient(#eceef2, #e4e6eb); padding: 3px 0 0 126px; }
.sum { width: 120px; height: 26px; background: #fff; border: 1px solid #d9dbe0; text-align: right; padding: 6px 4px 0 0; color: #333; }
.gnav { flex: 1; display: flex; align-items: stretch; background: #fff; min-height: 0; }
.gn-l { width: 161px; flex: none; display: flex; align-items: center; padding-left: 3px; }
.gi { flex: none; height: 7px; }
.first, .last2 { width: 9px; }
.prev, .next, .left, .right { width: 4px; }
.prev { margin-left: 8px; }
.rec { margin-left: 14px; width: 82px; white-space: nowrap; color: #333; letter-spacing: .25px; }
.next { margin-left: 14px; }
.last2 { margin-left: 9px; }
.gn-r { flex: 1; display: flex; align-items: center; padding: 0 6px 0 0; background: #fafafb; }
.left { margin-left: 6px; }
.hthumb { width: 258px; height: 7px; margin-left: 7px; background: #dfe1e5; border: 1px solid #b0b2b8; border-radius: 4px; }
.right { margin-left: auto; }

/* bottom tabs */
.btabs { flex: 1; display: flex; align-items: flex-start; padding-left: 3px; }
.bt { width: 65px; height: 25px; display: flex; align-items: center; justify-content: center; background: #eceef2; border: 1px solid #b3b5bb; border-top: 0; color: #444; padding: 4px 2px 0 0; }
.bt.on { width: 74px; height: 27px; background: #fff; color: #222; justify-content: flex-start; padding: 4px 0 0 9px; }
.x { margin-left: 11px; color: #777; font: bold 13px "DejaVu Sans", sans-serif; }

/* status */
.status {
  height: 26px; flex: none; margin: 0 5px; display: flex; align-items: center; padding-left: 15px;
  background: linear-gradient(#dcdee3, #c8cad0); border-top: 1px solid #b3b5bb; border-bottom: 1px solid #a9abb1;
  color: #3a3a3a; white-space: nowrap;
}
.s-user { width: 12px; height: 14px; }
.s1 { margin-left: 2px; }
.status .caret { margin-left: 5px; }
.sep { width: 1px; height: 18px; background: #b8bac0; margin: 0 10px; }
.s-a { margin-left: 10px; margin-right: 5px; }
.s-b { margin-left: 9px; margin-right: 6px; }
.s-c { margin-right: 9px; }
.s-cert { width: 15px; height: 13px; }
.s2 { margin-left: 5px; }
.s3 { margin-left: 9px; }
.red { color: #d8141c; }
.wide { letter-spacing: .15px; }
.s-ado { margin-left: 7px; letter-spacing: .3px; }
```
